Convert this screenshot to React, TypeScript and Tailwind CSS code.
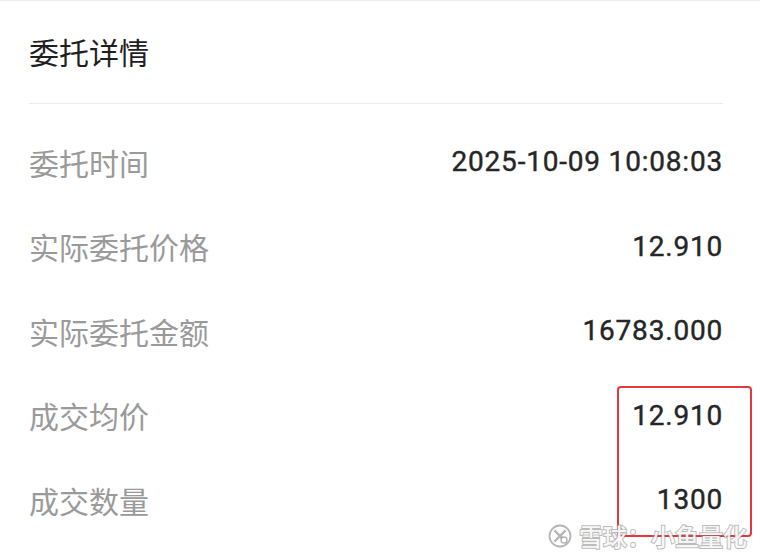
import React from 'react';

const rows = [
  { label: '委托时间', value: '2025-10-09 10:08:03' },
  { label: '实际委托价格', value: '12.910' },
  { label: '实际委托金额', value: '16783.000' },
  { label: '成交均价', value: '12.910' },
  { label: '成交数量', value: '1300' },
];

function Watermark() {
  return (
    <div className="pointer-events-none absolute bottom-[9px] right-[13px] flex items-center gap-[6px]">
      <svg width="26" height="24" viewBox="0 0 26 24" fill="none">
        <circle cx="13" cy="12" r="10.5" stroke="rgba(120,120,120,0.55)" strokeWidth="1.8" fill="rgba(255,255,255,0.8)" />
        <path d="M8 7 L18 17 M18 7 L8 17" stroke="rgba(120,120,120,0.55)" strokeWidth="2.4" strokeLinecap="round" />
        <circle cx="17" cy="16" r="3" stroke="rgba(120,120,120,0.55)" strokeWidth="1.5" fill="white" />
      </svg>
      <span className="font-['Noto_Sans_CJK_SC',sans-serif] text-[24px] font-medium leading-none text-[rgba(255,255,255,0.9)] [-webkit-text-stroke:2px_rgba(120,120,120,0.5)] [paint-order:stroke_fill]">
        雪球：小鱼量化
      </span>
    </div>
  );
}

export default function App() {
  return (
    <div className="relative h-[557px] w-[760px] overflow-hidden border-t border-[#ececec] bg-white font-['Noto_Sans_CJK_SC',sans-serif]">
      <div className="pl-[29px] pr-[37px] pt-[30px]">
        <h1 className="text-[30px] leading-[40px] font-normal text-[#1f1f1f]">委托详情</h1>
        <div className="mt-[32px] h-px bg-[#ececec]" />
        <div className="mt-[16px] flex flex-col">
          {rows.map((row) => (
            <div key={row.label} className="flex h-[84.5px] items-center justify-between">
              <span className="text-[30px] text-[#9a9a9a]">{row.label}</span>
              <span className="font-['Roboto',sans-serif] text-[28px] font-normal tracking-[0.8px] text-[#262626] [-webkit-text-stroke:0.4px_#262626]">
                {row.value}
              </span>
            </div>
          ))}
        </div>
      </div>
      <div className="pointer-events-none absolute left-[617px] top-[385px] h-[151px] w-[135px] rounded-[4px] border-[2.5px] border-[#e5383d]" />
      <Watermark />
    </div>
  );
}
